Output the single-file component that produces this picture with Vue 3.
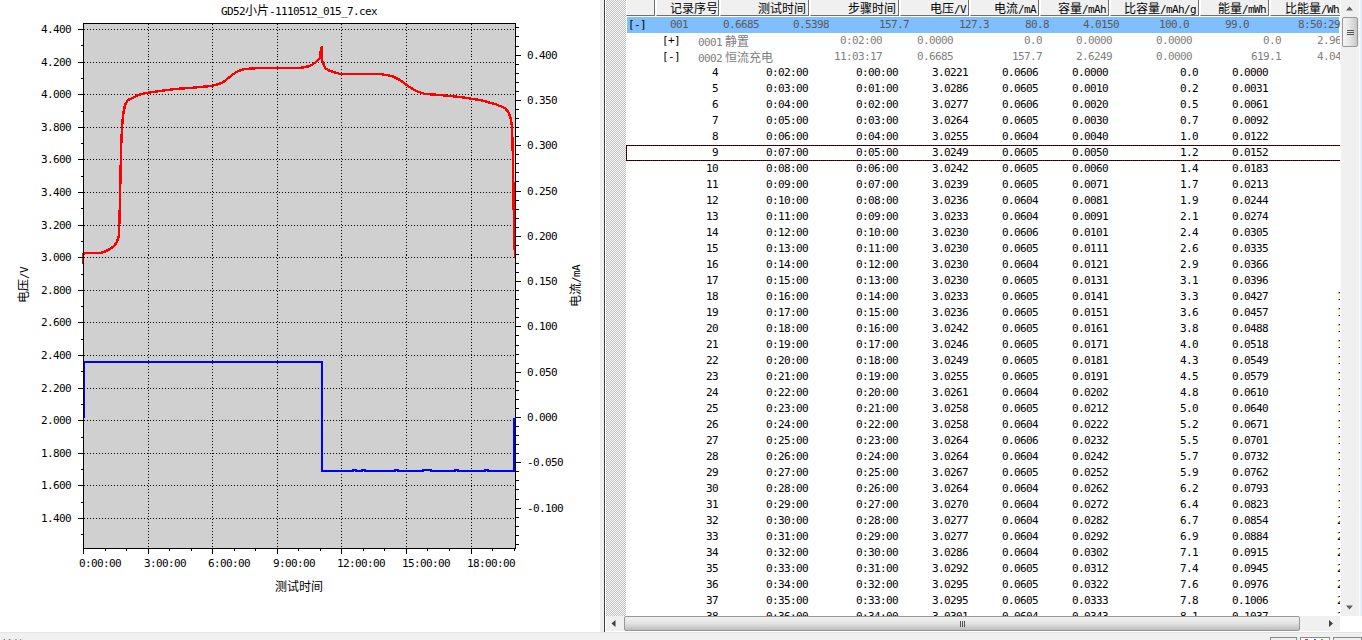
<script setup>
const L = 83.5, R = 515.5, T = 23.5, B = 548.5
const yLeft = v => Math.round(29 + (4.4 - v) / 0.2 * 32.6) + 0.5
const yRight = v => Math.round(417 - v / 0.05 * 45.3) + 0.5
const xHour = h => Math.round(83 + h * 21.53) + 0.5

const leftMajor = Array.from({ length: 16 }, (_, i) => {
  const v = 4.4 - i * 0.2
  return { y: yLeft(v), label: v.toFixed(3) }
})
const leftMinor = Array.from({ length: 16 }, (_, i) => yLeft(4.3 - i * 0.2))
const rightMajor = [0.4, 0.35, 0.3, 0.25, 0.2, 0.15, 0.1, 0.05, 0, -0.05, -0.1].map(v => ({
  y: yRight(v),
  label: v.toFixed(3)
}))
const rightMinor = []
for (let i = -14; i <= 43; i++) {
  if (i % 5 !== 0) {
    const y = yRight(i / 100)
    if (y > T && y < B) rightMinor.push(y)
  }
}
const vGrid = [3, 6, 9, 12, 15, 18].map(h => xHour(h))
const xMajor = [0, 3, 6, 9, 12, 15, 18].map(h => ({
  x: xHour(h),
  label: h + ':00:00'
}))
const xMinor = []
for (let h = 1; h <= 20; h++) if (h % 3 !== 0) xMinor.push(xHour(h))

const redLine = [
  [83, 264], [83, 254], [85, 253], [100, 253], [104, 252], [110, 249], [114, 246], [117, 242],
  [119, 235], [120, 200], [121, 150], [122, 128], [123, 115], [125, 105], [128, 100], [133, 98],
  [138, 95], [146, 93], [160, 91], [175, 89], [190, 88], [200, 87], [212, 86], [222, 83],
  [226, 80], [232, 75], [238, 71], [245, 69], [260, 68], [300, 68], [310, 66], [316, 62],
  [320, 58], [321, 49], [322, 46], [322, 60], [325, 68], [330, 71], [340, 74], [380, 74],
  [392, 76], [400, 80], [408, 86], [416, 91], [425, 94], [440, 95], [460, 97], [480, 100],
  [495, 104], [505, 108], [509, 113], [511, 120], [512, 127], [513, 160], [514, 230], [515, 258]
].map(p => p.join(',')).join(' ')

const blueLine = (() => {
  const pts = [[83, 417], [84, 417], [84, 362], [322, 362], [322, 471]]
  for (const [a, b] of [[353, 356], [362, 365], [395, 398], [423, 431], [455, 458], [485, 488]]) {
    pts.push([a, 471], [a, 470], [b, 470], [b, 471])
  }
  pts.push([514, 471], [514, 418])
  return pts.map(p => p.join(',')).join(' ')
})()

const headers = ['', '记录序号', '测试时间', '步骤时间', '电压/V', '电流/mA', '容量/mAh', '比容量/mAh/g', '能量/mWh', '比能量/Wh/kg']
const segs = text =>
  text.split(/([\u4e00-\u9fff]+)/).filter(Boolean).map(s => ({
    text: s,
    cjk: /[\u4e00-\u9fff]/.test(s)
  }))

const summary = ['001', '0.6685', '0.5398', '157.7', '127.3', '80.8', '4.0150', '100.0', '99.0', '8:50:29']
const steps = [
  { toggle: '[+]', code: '0001', name: '静置', values: ['0:02:00', '0.0000', '0.0', '0.0000', '0.0000', '0.0', '2.9614'] },
  { toggle: '[-]', code: '0002', name: '恒流充电', values: ['11:03:17', '0.6685', '157.7', '2.6249', '0.0000', '619.1', '4.0488'] }
]

const raw = `3.0221 .0606 .0000 0.0 .0000
3.0286 .0605 .0010 0.2 .0031
3.0277 .0606 .0020 0.5 .0061
3.0264 .0605 .0030 0.7 .0092
3.0255 .0604 .0040 1.0 .0122
3.0249 .0605 .0050 1.2 .0152
3.0242 .0605 .0060 1.4 .0183
3.0239 .0605 .0071 1.7 .0213
3.0236 .0604 .0081 1.9 .0244
3.0233 .0604 .0091 2.1 .0274
3.0230 .0606 .0101 2.4 .0305
3.0230 .0605 .0111 2.6 .0335
3.0230 .0604 .0121 2.9 .0366
3.0230 .0605 .0131 3.1 .0396
3.0233 .0605 .0141 3.3 .0427
3.0236 .0605 .0151 3.6 .0457
3.0242 .0605 .0161 3.8 .0488
3.0246 .0605 .0171 4.0 .0518
3.0249 .0605 .0181 4.3 .0549
3.0255 .0605 .0191 4.5 .0579
3.0261 .0604 .0202 4.8 .0610
3.0258 .0605 .0212 5.0 .0640
3.0258 .0604 .0222 5.2 .0671
3.0264 .0606 .0232 5.5 .0701
3.0264 .0604 .0242 5.7 .0732
3.0267 .0605 .0252 5.9 .0762
3.0264 .0604 .0262 6.2 .0793
3.0270 .0604 .0272 6.4 .0823
3.0277 .0604 .0282 6.7 .0854
3.0277 .0604 .0292 6.9 .0884
3.0286 .0604 .0302 7.1 .0915
3.0292 .0605 .0312 7.4 .0945
3.0295 .0605 .0322 7.6 .0976
3.0295 .0605 .0333 7.8 .1006
3.0301 .0604 .0343 8.1 .1037`
const clock = m => `${Math.floor(m / 60)}:${String(m % 60).padStart(2, '0')}:00`
const rows = raw.split('\n').map((line, i) => {
  const [v, c, q, s, e] = line.split(' ')
  const n = i + 4
  return {
    n,
    cells: [n, clock(n - 2), clock(n - 4), v, '0' + c, '0' + q, s, '0' + e, (Number('0' + e) * 240).toFixed(1)]
  }
})
</script>

<template>
  <div class="app">
    <div class="main">
      <section class="chart-pane">
        <svg class="chart" width="600" height="632" viewBox="0 0 600 632">
          <text class="lbl" x="221" y="15">GD52<tspan class="han">小片</tspan>-1110512_015_7.cex</text>
          <rect x="83" y="23" width="433" height="526" fill="#d0d0d0" />

          <g class="grid">
            <line v-for="t in leftMajor" :key="'h' + t.y" :x1="L" :x2="R" :y1="t.y" :y2="t.y" />
            <line v-for="x in vGrid" :key="'v' + x" :x1="x" :x2="x" :y1="T" :y2="B" />
          </g>

          <polyline class="curve" :points="blueLine" stroke="#0000ff" />
          <line class="curve" x1="515" x2="515" y1="418" y2="471" stroke="#0000ff" />
          <polyline class="curve" :points="redLine" stroke="#ff0000" />

          <g class="axis">
            <rect :x="L" :y="T" :width="R - L" :height="B - T" fill="none" />
            <line v-for="t in leftMajor" :key="'lm' + t.y" x1="78" :x2="L" :y1="t.y" :y2="t.y" />
            <line v-for="y in leftMinor" :key="'ln' + y" x1="81" :x2="L" :y1="y" :y2="y" />
            <line v-for="t in rightMajor" :key="'rm' + t.y" :x1="R" x2="521" :y1="t.y" :y2="t.y" />
            <line v-for="y in rightMinor" :key="'rn' + y" :x1="R" x2="519" :y1="y" :y2="y" />
            <line v-for="t in xMajor" :key="'xm' + t.x" :x1="t.x" :x2="t.x" :y1="B" y2="554" />
            <line v-for="x in xMinor" :key="'xn' + x" :x1="x" :x2="x" :y1="B" y2="551" />
          </g>

          <text v-for="t in leftMajor" :key="'tl' + t.y" class="lbl" x="71" :y="t.y + 3" text-anchor="end">{{ t.label }}</text>
          <text v-for="t in rightMajor" :key="'tr' + t.y" class="lbl" x="527" :y="t.y + 3">{{ t.label }}</text>
          <text v-for="t in xMajor" :key="'tx' + t.x" class="lbl" :x="t.x - 4.5" y="567">{{ t.label }}</text>

          <text class="han" x="275" y="591">测试时间</text>
          <text class="lbl" transform="translate(28 303) rotate(-90)"><tspan class="han">电压</tspan>/V</text>
          <text class="lbl" transform="translate(580 307) rotate(-90)"><tspan class="han">电流</tspan>/mA</text>
        </svg>
      </section>

      <div class="splitter"></div>

      <section class="data-pane">
        <div class="data-top">
          <div class="gutter"></div>
          <div class="table">
            <div class="row head">
              <div v-for="(h, i) in headers" :key="i" class="hcell" :class="{ firstcol: i === 1, lastcol: i === 9 }">
                <span v-for="(s, j) in segs(h)" :key="j" :class="s.cjk ? 'cjk' : 'mono'">{{ s.text }}</span>
              </div>
            </div>
            <div class="row sum">
              <span class="mono toggle">[-]</span>
              <span v-for="v in summary" :key="v" class="mono val">{{ v }}</span>
            </div>
            <div v-for="s in steps" :key="s.code" class="row step">
              <span></span>
              <span class="mono toggle-b">{{ s.toggle }}</span>
              <span class="step-name"><span class="mono">{{ s.code }}</span> <span class="cjk">{{ s.name }}</span></span>
              <span v-for="(v, i) in s.values" :key="i" class="mono val">{{ v }}</span>
            </div>
            <div v-for="r in rows" :key="r.n" class="row rec" :class="{ focus: r.n === 9 }">
              <span></span>
              <span v-for="(c, i) in r.cells" :key="i" class="mono val">{{ c }}</span>
            </div>
          </div>
          <div class="vscroll">
            <svg class="arrow" width="18" height="16" viewBox="0 0 18 16"><path d="M5 10.5h7L8.5 6.5z" fill="#606060" /></svg>
            <div class="vthumb"><i></i><i></i><i></i></div>
            <div class="vtrack"></div>
            <svg class="arrow" width="18" height="16" viewBox="0 0 18 16"><path d="M5 5.5h7L8.5 9.5z" fill="#606060" /></svg>
          </div>
          <div class="edge"></div>
        </div>
        <div class="hscroll">
          <svg class="arrow" width="18" height="15" viewBox="0 0 18 15"><path d="M9.5 4v7L5.5 7.5z" fill="#404040" /></svg>
          <div class="hthumb"><i></i><i></i><i></i></div>
          <div class="htrack"></div>
          <svg class="arrow" width="18" height="15" viewBox="0 0 18 15"><path d="M7 4v7L11 7.5z" fill="#404040" /></svg>
          <div class="corner"></div>
        </div>
      </section>
    </div>

    <footer class="status">
      <span class="cjk status-text">就绪</span>
      <span class="boxes">
        <i class="box wide"></i>
        <i class="box icons"></i>
        <i class="box end"></i>
      </span>
    </footer>
  </div>
</template>

<style scoped>
.app {
  width: 1362px;
  height: 640px;
  display: flex;
  flex-direction: column;
  overflow: hidden;
  background: #fff;
  color: #000;
}
.main {
  display: flex;
  height: 632px;
}
.chart-pane {
  width: 600px;
  flex: none;
}
.chart {
  display: block;
}
.lbl {
  font-family: "DejaVu Sans Mono", monospace;
  font-size: 11px;
  letter-spacing: -0.62px;
  fill: #000;
}
.han {
  font-family: "Noto Sans CJK SC", sans-serif;
  font-size: 12px;
  letter-spacing: 0;
  fill: #000;
}
.grid line {
  stroke: #000;
  stroke-width: 1;
  stroke-dasharray: 1 2;
  shape-rendering: crispEdges;
}
.axis line,
.axis rect {
  stroke: #000;
  stroke-width: 1;
  shape-rendering: crispEdges;
}
.curve {
  fill: none;
  stroke-width: 2.4;
  shape-rendering: crispEdges;
}
.splitter {
  width: 5px;
  flex: none;
  background: #f0f0f0;
  border-right: 1px solid #404040;
  box-sizing: border-box;
}
.data-pane {
  flex: 1;
  min-width: 0;
  display: flex;
  flex-direction: column;
  padding-left: 1px;
}
.data-top {
  display: flex;
  height: 616px;
}
.gutter {
  width: 20px;
  flex: none;
  background: repeating-conic-gradient(#bdbdbd 0 25%, #fff 0 50%) 0 0 / 2px 2px;
}
.table {
  width: 714px;
  flex: none;
  overflow: hidden;
}
.row {
  display: grid;
  height: 16px;
  line-height: 15px;
  white-space: nowrap;
  font-size: 12px;
}
.mono {
  font-family: "DejaVu Sans Mono", monospace;
  font-size: 11px;
  letter-spacing: -0.62px;
}
.cjk {
  font-family: "Noto Sans CJK SC", sans-serif;
  font-size: 12px;
}
.val {
  text-align: right;
}
.head {
  height: 17px;
  grid-template-columns: 30px 64px 90px 90px 70px 70px 70px 90px 70px 130px;
  background: #fff;
}
.hcell {
  height: 16px;
  margin-right: 1px;
  box-sizing: border-box;
  padding-right: 2px;
  text-align: right;
  background: #f0f0f0;
  border-right: 1px solid #707070;
  border-bottom: 1px solid #707070;
  border-left: 1px solid #fff;
}
.hcell.firstcol {
  padding-right: 0;
}
.hcell.lastcol {
  text-align: left;
  padding-left: 14px;
}
.sum {
  grid-template-columns: 34px 27px 71px 70px 80px 80px 60px 70px 70px 60px 91px;
  background: #80bfff;
  color: #5a5a5a;
  margin-left: 1px;
  margin-right: 1px;
}
.toggle {
  color: #000;
  padding-left: 1px;
}
.step {
  grid-template-columns: 36px 36px 92px 92px 71px 89px 70px 80px 89px 72px;
  color: #808080;
}
.toggle-b {
  color: #000;
}
.step-name {
  white-space: nowrap;
}
.rec {
  grid-template-columns: 30px 64px 90px 90px 70px 70px 70px 90px 70px 93px;
  padding-right: 0;
}
.rec .val {
  padding-right: 2px;
}
.rec.focus {
  box-sizing: border-box;
  border: 1px dotted #000;
  border-right: none;
  background: linear-gradient(#fff, #fff) padding-box, #700000 border-box;
  line-height: 13px;
  margin-left: 0;
  grid-template-columns: 29px 64px 90px 90px 70px 70px 70px 90px 70px 93px;
}
.vscroll {
  width: 18px;
  margin-left: 1px;
  flex: none;
  background: #f0f0f0;
  display: flex;
  flex-direction: column;
  align-items: center;
}
.arrow {
  display: block;
  flex: none;
}
.vthumb {
  width: 16px;
  height: 30px;
  margin-top: 1px;
  box-sizing: border-box;
  border: 1px solid #979797;
  border-radius: 2px;
  background: linear-gradient(to right, #f4f4f4, #e4e4e4 50%, #c8c8c8);
  display: flex;
  flex-direction: column;
  align-items: center;
  justify-content: center;
  gap: 1px;
  flex: none;
}
.vthumb i {
  display: block;
  width: 7px;
  height: 1px;
  background: #555;
}
.vtrack,
.htrack {
  flex: 1;
}
.edge {
  flex: 1;
  background: linear-gradient(to right, #fff, #d6e6f5);
}
.hscroll {
  height: 15px;
  display: flex;
  align-items: stretch;
  background: #f0f0f0;
}
.hthumb {
  width: 676px;
  flex: none;
  box-sizing: border-box;
  border: 1px solid #979797;
  border-radius: 2px;
  background: linear-gradient(#f2f2f2, #e2e2e2 50%, #bcbcbc);
  display: flex;
  justify-content: center;
  align-items: center;
  gap: 1px;
}
.hthumb i {
  display: block;
  width: 1px;
  height: 6px;
  background: #555;
}
.corner {
  width: 22px;
  flex: none;
  background: #fff;
}
.status {
  height: 8px;
  flex: none;
  display: flex;
  justify-content: space-between;
  overflow: hidden;
  background: #f0f0f0;
  border-top: 1px solid #e4e4e4;
  box-sizing: border-box;
}
.status-text {
  line-height: 12px;
  padding: 6px 0 0 1px;
  color: #333;
}
.boxes {
  display: flex;
  gap: 3px;
  padding-top: 4px;
}
.box {
  display: block;
  height: 10px;
  box-sizing: border-box;
  border: 1px solid #8a8a8a;
  background: #f0f0f0;
}
.box.wide {
  width: 27px;
}
.box.icons {
  width: 30px;
  background: linear-gradient(#fff 0 1px, transparent 1px), linear-gradient(to right, #fff 0 15%, #c05050 15% 25%, #fff 25% 45%, #5060c0 45% 55%, #fff 55% 70%, #50a050 70% 80%, #fff 80%);
}
.box.end {
  width: 29px;
}
</style>
